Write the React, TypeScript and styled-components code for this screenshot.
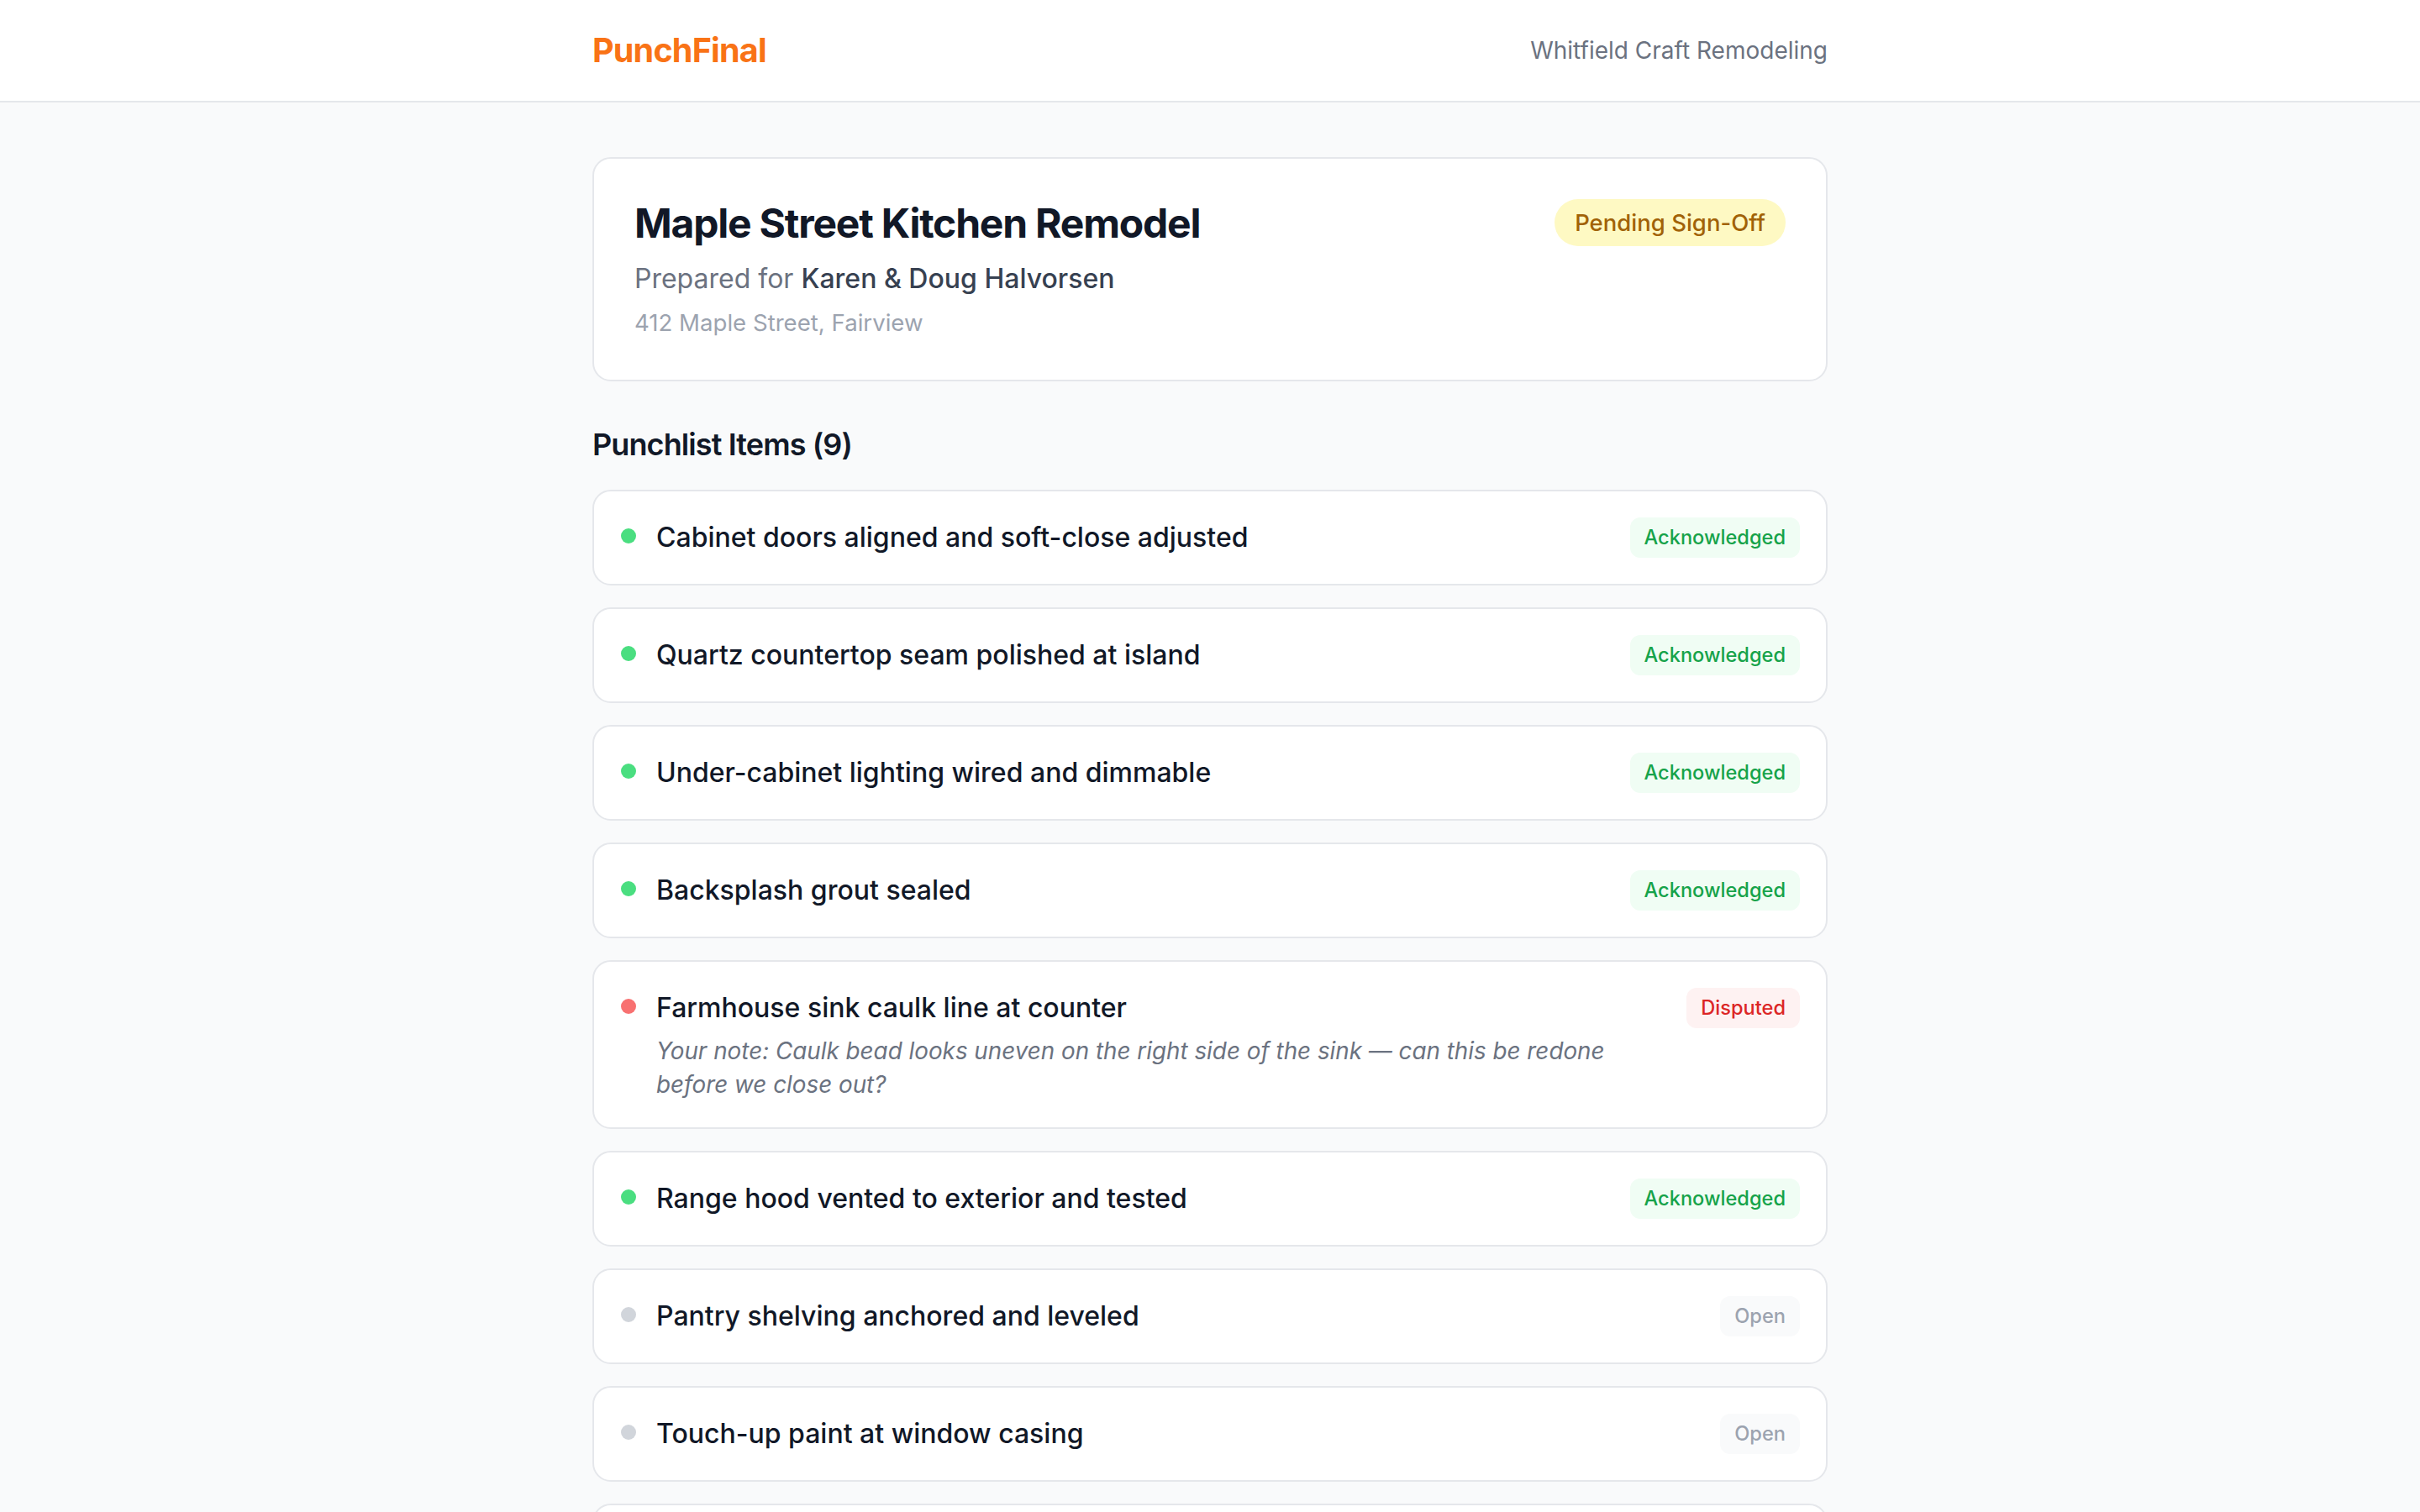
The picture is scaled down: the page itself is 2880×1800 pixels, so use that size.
import React from 'react';
import styled, { createGlobalStyle } from 'styled-components';

type Status = 'acknowledged' | 'disputed' | 'open';

type Item = {
  id: number;
  title: string;
  status: Status;
  note?: string;
};

const items: Item[] = [
  { id: 1, title: 'Cabinet doors aligned and soft-close adjusted', status: 'acknowledged' },
  { id: 2, title: 'Quartz countertop seam polished at island', status: 'acknowledged' },
  { id: 3, title: 'Under-cabinet lighting wired and dimmable', status: 'acknowledged' },
  { id: 4, title: 'Backsplash grout sealed', status: 'acknowledged' },
  {
    id: 5,
    title: 'Farmhouse sink caulk line at counter',
    status: 'disputed',
    note: 'Your note: Caulk bead looks uneven on the right side of the sink — can this be redone before we close out?',
  },
  { id: 6, title: 'Range hood vented to exterior and tested', status: 'acknowledged' },
  { id: 7, title: 'Pantry shelving anchored and leveled', status: 'open' },
  { id: 8, title: 'Touch-up paint at window casing', status: 'open' },
  { id: 9, title: 'Final clean and debris removal', status: 'open' },
];

const statusLabel: Record<Status, string> = {
  acknowledged: 'Acknowledged',
  disputed: 'Disputed',
  open: 'Open',
};

const palette: Record<Status, { dot: string; fg: string; bg: string }> = {
  acknowledged: { dot: '#4ade80', fg: '#16a34a', bg: '#f0fdf4' },
  disputed: { dot: '#f87171', fg: '#dc2626', bg: '#fef2f2' },
  open: { dot: '#d1d5db', fg: '#9ca3af', bg: '#f9fafb' },
};

export default function App() {
  return (
    <>
      <GlobalStyle />
      <Header>
        <HeaderInner>
          <Logo>PunchFinal</Logo>
          <Company>Whitfield Craft Remodeling</Company>
        </HeaderInner>
      </Header>
      <Main>
        <ProjectCard>
          <ProjectInfo>
            <ProjectTitle>Maple Street Kitchen Remodel</ProjectTitle>
            <Prepared>
              Prepared for <strong>Karen &amp; Doug Halvorsen</strong>
            </Prepared>
            <Address>412 Maple Street, Fairview</Address>
          </ProjectInfo>
          <PendingBadge>Pending Sign-Off</PendingBadge>
        </ProjectCard>

        <SectionTitle>Punchlist Items ({items.length})</SectionTitle>
        <List>
          {items.map(item => (
            <ItemCard key={item.id}>
              <Dot $status={item.status} />
              <ItemBody>
                <ItemTitle>{item.title}</ItemTitle>
                {item.note && <Note>{item.note}</Note>}
              </ItemBody>
              <StatusBadge $status={item.status}>{statusLabel[item.status]}</StatusBadge>
            </ItemCard>
          ))}
        </List>
      </Main>
    </>
  );
}

const GlobalStyle = createGlobalStyle`
  * { box-sizing: border-box; }
  body {
    margin: 0;
    background: #f9fafb;
    font-family: Inter, "Noto Sans", sans-serif;
    color: #111827;
    -webkit-font-smoothing: antialiased;
  }
`;

const Header = styled.header`
  background: #ffffff;
  border-bottom: 2px solid #e5e7eb;
`;

const HeaderInner = styled.div`
  width: 1470px;
  height: 120px;
  margin: 0 auto;
  display: flex;
  align-items: center;
  justify-content: space-between;
`;

const Logo = styled.div`
  font-size: 39.5px;
  font-weight: 700;
  color: #f97316;
  letter-spacing: -0.02em;
`;

const Company = styled.div`
  font-size: 28px;
  color: #6b7280;
`;

const Main = styled.main`
  width: 1470px;
  margin: 0 auto;
  padding: 65px 0 80px;
`;

const ProjectCard = styled.section`
  background: #ffffff;
  border: 2px solid #e5e7eb;
  border-radius: 22px;
  padding: 48px;
  display: flex;
  align-items: flex-start;
  justify-content: space-between;
`;

const ProjectInfo = styled.div`
  display: flex;
  flex-direction: column;
`;

const ProjectTitle = styled.h1`
  margin: 0;
  font-size: 48px;
  line-height: 57px;
  font-weight: 700;
  letter-spacing: -0.025em;
  color: #111827;
`;

const Prepared = styled.p`
  margin: 15px 0 0;
  font-size: 32px;
  line-height: 46px;
  color: #6b7280;

  strong {
    font-weight: 500;
    color: #374151;
  }
`;

const Address = styled.p`
  margin: 10px 0 0;
  font-size: 27.6px;
  line-height: 39px;
  color: #9ca3af;
`;

const PendingBadge = styled.span`
  flex-shrink: 0;
  padding: 10px 24px;
  border-radius: 999px;
  background: #fef9c3;
  color: #a16207;
  font-size: 27.5px;
  line-height: 36px;
  font-weight: 500;
`;

const SectionTitle = styled.h2`
  margin: 50px 0 28.5px;
  font-size: 36px;
  line-height: 50px;
  font-weight: 600;
  letter-spacing: -0.025em;
  color: #111827;
`;

const List = styled.div`
  display: flex;
  flex-direction: column;
  gap: 26px;
`;

const ItemCard = styled.div`
  background: #ffffff;
  border: 2px solid #e5e7eb;
  border-radius: 22px;
  padding: 31px 31px 31px 32px;
  display: flex;
  align-items: flex-start;
  gap: 24px;
`;

const Dot = styled.span<{ $status: Status }>`
  flex-shrink: 0;
  width: 18px;
  height: 18px;
  margin-top: 13px;
  border-radius: 50%;
  background: ${p => palette[p.$status].dot};
`;

const ItemBody = styled.div`
  flex: 1;
  min-width: 0;
`;

const ItemTitle = styled.div`
  font-size: 32px;
  line-height: 48px;
  font-weight: 500;
  color: #111827;
`;

const Note = styled.p`
  margin: 7px 0 0;
  font-size: 27.8px;
  line-height: 40px;
  font-style: italic;
  color: #6b7280;
`;

const StatusBadge = styled.span<{ $status: Status }>`
  flex-shrink: 0;
  padding: 9px 17px;
  border-radius: 12px;
  font-size: 23.6px;
  line-height: 30px;
  font-weight: 500;
  color: ${p => palette[p.$status].fg};
  background: ${p => palette[p.$status].bg};
`;
